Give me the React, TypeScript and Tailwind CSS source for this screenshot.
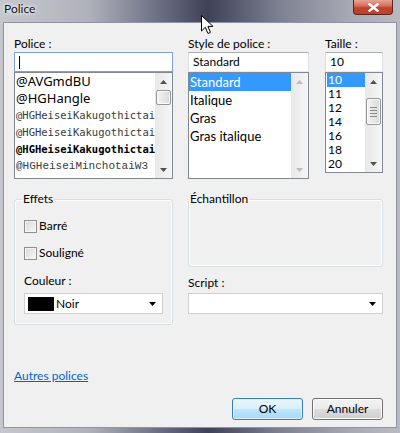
import type { ReactNode } from "react";

const UI_FONT = "font-['Lato','Noto_Sans',sans-serif]";
const EDIT_BORDER = "border border-[#abadb3] border-b-[#e3e9ef] border-x-[#dbdfe6]";

const POLICE_ROWS = [
  { label: "@AVGmdBU", className: "text-[13px] font-['Noto_Sans',sans-serif] text-black" },
  { label: "@HGHangle", className: "text-[13px] font-['Noto_Sans',sans-serif] text-black" },
  { label: "@HGHeiseiKakugothictai", className: "text-[10.5px] font-['DejaVu_Sans_Mono',monospace] text-[#3a3a3a]" },
  { label: "@HGHeiseiKakugothictai", className: "text-[10.5px] font-['DejaVu_Sans_Mono',monospace] text-[#3a3a3a]" },
  { label: "@HGHeiseiKakugothictai", className: "text-[10.5px] font-bold font-['DejaVu_Sans_Mono',monospace] text-black" },
  { label: "@HGHeiseiMinchotaiW3", className: "text-[11px] font-['Liberation_Mono',monospace] text-[#3a3a3a]" },
];
const STYLES = ["Standard", "Italique", "Gras", "Gras italique"];
const SIZES = ["10", "11", "12", "14", "16", "18", "20"];

function Tri({ up, muted }: { up?: boolean; muted?: boolean }) {
  return (
    <svg width="7" height="4" viewBox="0 0 7 4" className={muted ? "fill-[#bdbdbd]" : "fill-[#505050]"}>
      <path d={up ? "M0 4 L3.5 0 L7 4 Z" : "M0 0 L7 0 L3.5 4 Z"} />
    </svg>
  );
}

function ScrollBar({ thumb, muted }: { thumb?: ReactNode; muted?: boolean }) {
  return (
    <div className="flex w-[17px] shrink-0 flex-col bg-gradient-to-r from-[#e8e8e8] to-[#f6f6f6]">
      <div className="flex h-[17px] items-center justify-center"><Tri up muted={muted} /></div>
      <div className="flex-1 px-px">{thumb}</div>
      <div className="flex h-[17px] items-center justify-center"><Tri muted={muted} /></div>
    </div>
  );
}

function Thumb({ className, grip }: { className: string; grip?: boolean }) {
  return (
    <div className={`flex flex-col items-center justify-center gap-[2px] rounded-[2px] border border-[#979797] bg-gradient-to-r from-[#f4f4f4] to-[#d9d9d9] shadow-[inset_0_0_0_1px_#fbfbfb] ${className}`}>
      {grip && [0, 1, 2, 3].map((i) => <span key={i} className="h-px w-[7px] bg-[#8a8a8a]" />)}
    </div>
  );
}

function Combo({ width, children }: { width: string; children?: ReactNode }) {
  return (
    <div className={`flex h-[21px] items-center border border-[#d0d0d0] bg-white ${width}`}>
      <div className="flex flex-1 items-center">{children}</div>
      <svg width="7" height="4" viewBox="0 0 7 4" className="mr-[6px] fill-black"><path d="M0 0 L7 0 L3.5 4 Z" /></svg>
    </div>
  );
}

function Check({ label }: { label: string }) {
  return (
    <div className="flex h-[16px] items-center gap-[2px]">
      <span className="size-[13px] border border-[#8e8f8f] bg-gradient-to-br from-[#d8d8d8] to-[#f8f8f8] shadow-[inset_0_0_0_1px_#f4f4f4]" />
      <span className="leading-[16px]">{label}</span>
    </div>
  );
}

export default function App() {
  return (
    <div className={`relative flex h-[433px] w-[400px] flex-col overflow-hidden bg-[linear-gradient(90deg,#c6c7cd_0%,#b0b2bb_22%,#6b6e82_40%,#3f4257_52%,#7e8192_70%,#a8aab4_88%,#b9bac1_100%)] text-[12px] text-black ${UI_FONT}`}>
      <div className="flex h-[22px] items-start justify-between">
        <span className="pl-[4px] pt-[1px] text-[12px] leading-[16px] text-[#111] [text-shadow:0_0_6px_#ffffff,0_0_3px_#ffffff]">Police</span>
        <button type="button" className="mr-[7px] flex h-[15px] w-[40px] items-center justify-center rounded-b-[4px] border border-t-0 border-[#5e2320] bg-[linear-gradient(180deg,#e8a597_0%,#d46a55_45%,#c0412b_55%,#b8452f_100%)]">
          <svg width="11" height="9" viewBox="0 0 11 9" className="stroke-white" strokeWidth="2.4" strokeLinecap="square">
            <path d="M1.5 1.2 L9.5 7.8 M9.5 1.2 L1.5 7.8" />
          </svg>
        </button>
      </div>

      <div className="mx-[3px] mb-[5px] flex flex-1 flex-col border border-[#8f92a2] bg-[#f0f0f0] pl-[10px] pr-[13px] pt-[13px]">
        <div className="flex">
          <div className="w-[159px]">
            <div className="h-[16px] leading-[16px]">Police :</div>
            <div className="flex h-[20px] items-center border border-[#7da2ce] bg-white pl-[4px]"><span className="h-[13px] w-px bg-black" /></div>
            <div className="flex h-[107px] border border-[#828790] bg-white">
              <div className="min-w-0 flex-1 overflow-hidden">
                {POLICE_ROWS.map((row, i) => (
                  <div key={i} className={`h-[17px] whitespace-nowrap pl-px leading-[17px] ${row.className}`}>{row.label}</div>
                ))}
              </div>
              <ScrollBar thumb={<Thumb className="h-[15px]" />} />
            </div>
          </div>

          <div className="ml-[15px] w-[121px]">
            <div className="h-[16px] leading-[16px]">Style de police :</div>
            <div className={`flex h-[20px] items-center bg-white pl-[4px] ${EDIT_BORDER}`}>Standard</div>
            <div className="flex h-[107px] border border-[#828790] bg-white">
              <div className="flex-1 text-[13px]">
                {STYLES.map((s, i) => (
                  <div key={s} className={`h-[18px] pl-px leading-[18px] ${i === 0 ? "bg-[#3399ff] text-white" : ""}`}>{s}</div>
                ))}
              </div>
              <ScrollBar muted />
            </div>
          </div>

          <div className="ml-[16px] w-[58px]">
            <div className="h-[16px] leading-[16px]">Taille :</div>
            <div className={`flex h-[20px] items-center bg-white pl-[4px] ${EDIT_BORDER}`}>10</div>
            <div className="flex h-[101px] border border-[#828790] bg-white">
              <div className="flex-1 pl-px">
                {SIZES.map((s, i) => (
                  <div key={s} className={`h-[14px] pl-px leading-[14px] ${i === 0 ? "bg-[#3399ff] text-white" : ""}`}>{s}</div>
                ))}
              </div>
              <ScrollBar thumb={<Thumb className="mt-[8px] h-[27px]" grip />} />
            </div>
          </div>
        </div>

        <div className="mt-[12px] flex">
          <fieldset className="h-[134px] w-[159px] rounded-[3px] border border-[#d5dfe5] shadow-[inset_0_0_0_1px_#ffffff]">
            <legend className="ml-[7px] px-px leading-[16px]">Effets</legend>
            <div className="pl-[9px]">
              <div className="mt-[11px]"><Check label="Barré" /></div>
              <div className="mt-[11px]"><Check label="Souligné" /></div>
              <div className="mt-[12px] h-[16px] leading-[16px]">Couleur :</div>
              <div className="mt-[4px]">
                <Combo width="w-[139px]">
                  <span className="ml-[3px] h-[14px] w-[26px] bg-black" />
                  <span className="ml-[2px]">Noir</span>
                </Combo>
              </div>
            </div>
          </fieldset>

          <div className="ml-[15px] w-[195px]">
            <fieldset className="h-[76px] rounded-[3px] border border-[#d5dfe5] shadow-[inset_0_0_0_1px_#ffffff]">
              <legend className="px-px leading-[16px]">Échantillon</legend>
            </fieldset>
            <div className="mt-[8px] h-[16px] leading-[16px]">Script :</div>
            <div className="mt-[2px]"><Combo width="w-[195px]" /></div>
          </div>
        </div>

        <div className="mt-[43px] h-[16px] leading-[16px]">
          <span className="text-[#0066cc] underline">Autres polices</span>
        </div>

        <div className="mt-[14px] flex justify-end gap-[9px]">
          <button type="button" className="h-[22px] w-[71px] rounded-[3px] border border-[#3c7fb1] bg-[linear-gradient(180deg,#eaf6fd_0%,#d9f0fc_50%,#bee6fd_50%,#a7d9f5_100%)] shadow-[inset_0_0_0_1px_#d8f0fc]">OK</button>
          <button type="button" className="h-[22px] w-[71px] rounded-[3px] border border-[#707070] bg-[linear-gradient(180deg,#f2f2f2_0%,#ebebeb_50%,#dddddd_50%,#cfcfcf_100%)] shadow-[inset_0_0_0_1px_#fcfcfc]">Annuler</button>
        </div>
      </div>

      <svg width="13" height="20" viewBox="0 0 13 20" className="absolute left-[201px] top-[15px]">
        <path d="M0.5 0.5 L0.5 16 L4.3 12.3 L7 18.5 L9.5 17.4 L6.9 11.4 L12 11.4 Z" fill="#fff" stroke="#000" strokeWidth="1" strokeLinejoin="round" />
      </svg>
    </div>
  );
}
